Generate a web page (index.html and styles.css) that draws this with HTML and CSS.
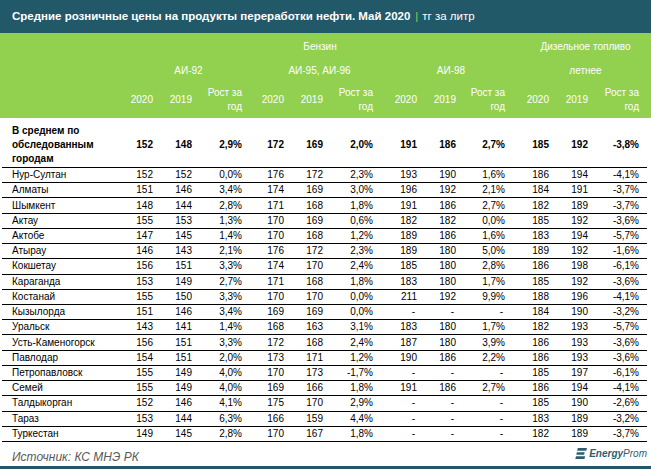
FILE: index.html
```html
<!DOCTYPE html>
<html lang="ru">
<head>
<meta charset="utf-8">
<link rel="stylesheet" href="styles.css">
</head>
<body>
<div class="page">
  <header class="titlebar">
    <span class="title">Средние розничные цены на продукты переработки нефти. Май 2020</span>
    <span class="sep">|</span>
    <span class="unit">тг за литр</span>
  </header>

  <div class="head">
    <div class="grid hrow r1">
      <div class="grp benz">Бензин</div>
      <div class="grp dies">Дизельное топливо</div>
    </div>
    <div class="grid hrow r2">
      <div class="grp c1">АИ-92</div>
      <div class="grp c2">АИ-95, АИ-96</div>
      <div class="grp c3">АИ-98</div>
      <div class="grp c4">летнее</div>
    </div>
    <div class="grid hrow r3">
      <div></div>
      <div class="hc">2020</div><div class="hc">2019</div><div class="hc">Рост за<br>год</div>
      <div class="hc">2020</div><div class="hc">2019</div><div class="hc">Рост за<br>год</div>
      <div class="hc">2020</div><div class="hc">2019</div><div class="hc">Рост за<br>год</div>
      <div class="hc">2020</div><div class="hc">2019</div><div class="hc last">Рост за<br>год</div>
    </div>
  </div>

  <div class="body" id="body">
    <div class="grid row avg">
      <div class="lbl">В среднем по<br>обследованным<br>городам</div>
      <div>152</div><div>148</div><div>2,9%</div>
      <div>172</div><div>169</div><div>2,0%</div>
      <div>191</div><div>186</div><div>2,7%</div>
      <div>185</div><div>192</div><div class="last">-3,8%</div>
    </div>
  </div>

  <footer class="foot">
    <span class="src">Источник: КС МНЭ РК</span>
    <span class="logo">
      <svg class="logo-icon" width="12" height="11" viewBox="0 0 13 12">
        <polygon points="3,0 13,0 12.3,3 2.3,3" fill="#2c5f6f"/>
        <polygon points="2,4.5 10.5,4.5 9.9,7.3 1.4,7.3" fill="#2c5f6f"/>
        <polygon points="1,9 11,9 10.3,12 0.3,12" fill="#2c5f6f"/>
      </svg>
      <span class="e1">Energy</span><span class="e2">Prom</span>
    </span>
  </footer>
  <div class="bottombar"></div>
</div>
<script src="app.js"></script>
</body>
</html>
```

FILE: app.js
```js
const rows = [
["Нур-Султан","152","152","0,0%","176","172","2,3%","193","190","1,6%","186","194","-4,1%"],
["Алматы","151","146","3,4%","174","169","3,0%","196","192","2,1%","184","191","-3,7%"],
["Шымкент","148","144","2,8%","171","168","1,8%","191","186","2,7%","182","189","-3,7%"],
["Актау","155","153","1,3%","170","169","0,6%","182","182","0,0%","185","192","-3,6%"],
["Актобе","147","145","1,4%","170","168","1,2%","189","186","1,6%","183","194","-5,7%"],
["Атырау","146","143","2,1%","176","172","2,3%","189","180","5,0%","189","192","-1,6%"],
["Кокшетау","156","151","3,3%","174","170","2,4%","185","180","2,8%","186","198","-6,1%"],
["Караганда","153","149","2,7%","171","168","1,8%","183","180","1,7%","185","192","-3,6%"],
["Костанай","155","150","3,3%","170","170","0,0%","211","192","9,9%","188","196","-4,1%"],
["Кызылорда","151","146","3,4%","169","169","0,0%","-","-","-","184","190","-3,2%"],
["Уральск","143","141","1,4%","168","163","3,1%","183","180","1,7%","182","193","-5,7%"],
["Усть-Каменогорск","156","151","3,3%","172","168","2,4%","187","180","3,9%","186","193","-3,6%"],
["Павлодар","154","151","2,0%","173","171","1,2%","190","186","2,2%","186","193","-3,6%"],
["Петропавловск","155","149","4,0%","170","173","-1,7%","-","-","-","185","197","-6,1%"],
["Семей","155","149","4,0%","169","166","1,8%","191","186","2,7%","186","194","-4,1%"],
["Талдыкорган","152","146","4,1%","175","170","2,9%","-","-","-","185","190","-2,6%"],
["Тараз","153","144","6,3%","166","159","4,4%","-","-","-","183","189","-3,2%"],
["Туркестан","149","145","2,8%","170","167","1,8%","-","-","-","182","189","-3,7%"]
];
const body = document.getElementById("body");
rows.forEach(r => {
  const row = document.createElement("div");
  row.className = "grid row city";
  r.forEach((v, i) => {
    const c = document.createElement("div");
    c.textContent = v;
    const cls = [];
    if (i === 0) cls.push("lbl");
    if (i === 12) cls.push("last");
    if (v === "-") cls.push("dash");
    c.className = cls.join(" ");
    row.appendChild(c);
  });
  body.appendChild(row);
});
```

FILE: styles.css
```css
* { box-sizing: border-box; }
html, body { margin: 0; padding: 0; background: #fff; }
body {
  font-family: "Liberation Sans", Arial, sans-serif;
  font-size: 10px;
  color: #000;
}
.page { width: 651px; height: 469px; display: flex; flex-direction: column; overflow: hidden; }

.titlebar {
  height: 33px;
  background: #215968;
  color: #fff;
  display: flex;
  align-items: center;
  padding: 0 0 1px 12px;
  font-size: 11.5px;
  white-space: nowrap;
}
.title { font-weight: bold; }
.sep { color: #92d050; margin: 0 4px 0 5px; }
.unit { font-weight: normal; }

.grid {
  display: grid;
  grid-template-columns: 114px 42px 39px 50px 42px 39px 50px 44px 39px 49px 44px 39px 54px;
  margin-left: 2px;
  width: 645px;
}

.head { background: #92d050; color: #fff; height: 85px; }
.hrow { align-items: center; }
.r1 { height: 25px; padding-top: 1px; }
.r2 { height: 24px; }
.r3 { height: 36px; }
.grp { text-align: center; padding-left: 14px; }
.benz { grid-column: 2 / 11; }
.dies { grid-column: 11 / 14; }
.c1 { grid-column: 2 / 5; }
.c2 { grid-column: 5 / 8; }
.c3 { grid-column: 8 / 11; }
.c4 { grid-column: 11 / 14; }
.hc { text-align: right; padding-right: 5px; line-height: 14px; }
.hc.last { padding-right: 8px; }

.row { align-items: center; border-bottom: 1px solid #000; }
.row > div { text-align: right; padding-right: 5px; }
.row > div.lbl { text-align: left; padding-left: 10px; padding-right: 0; white-space: nowrap; }
.row > div.last { padding-right: 8px; }
.row > div.dash { padding-right: 7px; }
.avg { height: 50px; font-weight: bold; padding: 4px 0 0; }
.avg .lbl { line-height: 14px; }
.city { height: 15.22px; line-height: 14px; }

.foot {
  flex: 1;
  display: flex;
  align-items: center;
  justify-content: space-between;
  padding: 0 4px 0 12px;
}
.src { font-style: italic; color: #595959; font-size: 12px; padding-top: 6px; }
.logo { display: flex; align-items: center; color: #2c5f6f; font-style: italic; font-size: 10px; }
.logo-icon { margin-right: 2px; }
.e1 { font-weight: bold; }
.e2 { font-weight: normal; }
.bottombar { height: 3px; background: #215968; }
```
